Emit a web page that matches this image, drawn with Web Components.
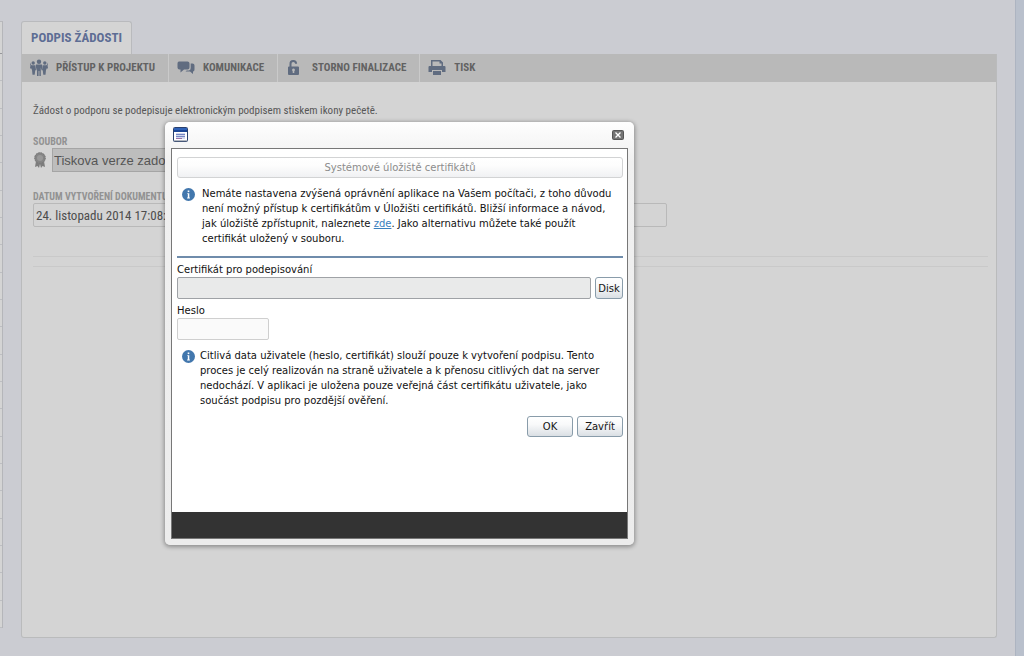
<!DOCTYPE html>
<html lang="cs">
<head>
<meta charset="utf-8">
<title>Podpis žádosti</title>
<style>
html, body { height: 100%; margin: 0; }
body { background: #cbccd2; font-family: "Roboto Condensed", "Liberation Sans Narrow", Roboto, sans-serif; color: #575757; overflow: hidden; }
</style>
</head>
<body>
<app-page>
  <side-list slot="side"></side-list>
  <tab-panel label="PODPIS ŽÁDOSTI">
    <tool-bar slot="bar">
      <tool-item icon="people" label="PŘÍSTUP K PROJEKTU"></tool-item>
      <tool-item icon="chat" label="KOMUNIKACE"></tool-item>
      <tool-item icon="lock" label="STORNO FINALIZACE"></tool-item>
      <tool-item icon="print" label="TISK"></tool-item>
    </tool-bar>
    <request-form></request-form>
  </tab-panel>
</app-page>
<sign-dialog></sign-dialog>
<script>
const define = (name, html, setup) => customElements.define(name, class extends HTMLElement {
  connectedCallback() {
    if (this.shadowRoot) return;
    const root = this.attachShadow({ mode: "open" });
    root.innerHTML = html;
    if (setup) setup(root, this);
  }
});

const icons = {
  people: '<svg width="18" height="18" viewBox="0 0 18 18"><g fill="#606c80"><circle cx="3.2" cy="4" r="1.7"/><circle cx="14.8" cy="4" r="1.7"/><path d="M1 6.3h4.3v4.5l-.6 5H2.5L2 11 1 9zM12.7 6.3H17V9l-1 2-.5 4.8h-2.2l-.6-5z"/><path d="M0 3.5l1.6 3-1 3.5L0 9l.4-2.2zM18 3.5l-1.6 3 1 3.5.6-1-.4-2.2z"/><circle cx="9" cy="2.8" r="2.2"/><path d="M6 5.6h6l1 5.7h-1.4l-.8-2.8V17H9.4v-5h-.8v5H7V8.500l-.7 2.800H5z"/></g></svg>',
  chat: '<svg width="18" height="18" viewBox="0 0 18 18"><g fill="#606c80"><path d="M2 2.500h8.500q2 0 2 2v4q0 2-2 2H7l-3.500 3v-3H2.500q-2 0-2-2v-4q0-2 1.500-2z"/><path d="M13.700 4.500h1.800q2 0 2 2v4q0 2-1.500 2v2.500l-3-2.500H8.500l1.200-1H12q1.700-.5 1.700-2.500z"/></g></svg>',
  lock: '<svg width="18" height="18" viewBox="0 0 18 18"><path d="M4.500 8V5a2.800 2.800 0 0 1 5.600-.3" fill="none" stroke="#606c80" stroke-width="2"/><path fill="#606c80" fill-rule="evenodd" d="M3 7.500h9q1 0 1 1V15q0 1-1 1H3q-1 0-1-1V8.500q0-1 1-1zM7.500 9.500a1.500 1.500 0 0 0-.8 2.700V14h1.600v-1.800A1.500 1.500 0 0 0 7.500 9.500z"/></svg>',
  print: '<svg width="18" height="18" viewBox="0 0 18 18"><path fill="#606c80" fill-rule="evenodd" d="M3 1h9.500L15 3.500V7h1.500Q17.500 7 17.500 8v5H14v-2H4v2H.500V8q0-1 1-1H3zM4.500 2.500V7h9V4.500h-2v-2z"/><path fill="#606c80" d="M5 12h8v4H5z"/></svg>',
  info: '<svg width="13" height="13" viewBox="0 0 13 13"><circle cx="6.500" cy="6.500" r="6.500" fill="#4277ad"/><rect x="5.700" y="2.500" width="1.600" height="1.600" fill="#fff"/><path d="M5.300 5.300h2v4.200h.6v.9H5.100v-.9h.7V6.100h-.5z" fill="#fff"/></svg>'
};

define("app-page", `<style>
:host { display: flex; min-height: 100vh; box-sizing: border-box; }
main { flex: 1; min-width: 0; display: flex; padding: 21px 18px 18px 18px; }
.edge { width: 9px; box-sizing: border-box; background: #b9c0cc; border-left: 1px solid #adb4c1; }
</style><slot name="side"></slot><main><slot></slot></main><div class="edge"></div>`);

define("side-list", `<style>
:host { display: flex; flex-direction: column; width: 3px; box-sizing: border-box; margin: 21px 0 28px; border-right: 1px solid #b5b6ba; border-top: 1px solid #b8b9bd; background: #d4d4d4; }
i { flex: 1; box-sizing: border-box; border-bottom: 1px solid #bdbec2; }
i:first-of-type { flex: none; height: 32px; border-color: #96979b; }
</style>` + "<i></i>".repeat(22));

define("tab-panel", `<style>
:host { flex: 1; min-width: 0; display: flex; flex-direction: column; }
a { align-self: flex-start; box-sizing: border-box; height: 33px; padding: 0 9px; border: 1px solid #b9babd; border-bottom: 0; border-radius: 3px 3px 0 0; background: #d4d4d4; color: #5d6d94; font: bold 13px/32px "Roboto Condensed", "Liberation Sans Narrow", Roboto, sans-serif; text-decoration: none; white-space: nowrap; }
section { flex: 1; border: 1px solid #babbbc; border-top: 0; border-radius: 0 0 3px 3px; background: #d4d4d4; }
</style><a href="#"></a><section><slot name="bar"></slot><slot></slot></section>`,
(r, el) => { r.querySelector("a").textContent = el.getAttribute("label"); });

define("tool-bar", `<style>
:host { display: flex; height: 28px; background: #b9b9b9; }
</style><slot></slot>`);

define("tool-item", `<style>
:host { display: flex; border-right: 1px solid #cacaca; }
:host(:last-of-type) { border: 0; }
button { display: flex; align-items: center; gap: 8px; border: 0; background: none; padding: 0 13px 0 8px; color: #626262; font: bold 11px/28px "Roboto Condensed", "Liberation Sans Narrow", Roboto, sans-serif; white-space: nowrap; }
</style><button></button>`,
(r, el) => { r.querySelector("button").innerHTML = icons[el.getAttribute("icon")] + "<span>" + el.getAttribute("label") + "</span>"; });

define("request-form", `<style>
:host { display: block; padding: 20px 8px 0 11px; }
p { margin: 0 0 16px; font-size: 11px; line-height: 18px; white-space: nowrap; }
label { display: block; font-size: 10px; line-height: 12px; font-weight: bold; color: #929292; white-space: nowrap; }
.file { display: flex; align-items: center; gap: 5px; margin-bottom: 19px; }
input { box-sizing: border-box; height: 24px; margin: 0; color: #555; border: 1px solid #b9b9b9; border-radius: 2px; outline: 0; }
#file { width: 400px; padding: 0 1px; background: #bdbdbd; border-color: #a5a5a5; border-radius: 0; font: 13px "Liberation Sans", Arial, sans-serif; }
#date { display: block; width: 634px; margin-bottom: 29px; padding: 0 2px; background: #d4d4d4; font: 13px "Roboto Condensed", "Liberation Sans Narrow", Roboto, sans-serif; color: #4d4d4d; }
hr { margin: 0 0 9px; border: 0; border-top: 1px solid #c9c9c9; }
</style>
<p>Žádost o podporu se podepisuje elektronickým podpisem stiskem ikony pečetě.</p>
<label for="file">SOUBOR</label>
<div class="file"><svg width="14" height="16" viewBox="0 0 14 16"><path d="M3 9L2 15l2.500-1L6 16l1-4 1 4 1.500-2 2.500 1-1-6z" fill="#7d7d7d"/><circle cx="7" cy="6" r="5.500" fill="#858585"/><circle cx="7" cy="6" r="5.300" fill="none" stroke="#777" stroke-dasharray="1.500 1"/><circle cx="7" cy="6" r="3" fill="#999"/></svg><input id="file" value="Tiskova verze zadosti" readonly></div>
<label for="date">DATUM VYTVOŘENÍ DOKUMENTU</label>
<input id="date" value="24. listopadu 2014 17:08:">
<hr><hr>`);

define("info-note", `<style>
:host { display: flex; align-items: flex-start; gap: var(--gap, 5px); padding-left: 5px; }
svg { flex: none; margin-top: 2px; }
p { margin: 0; line-height: 15px; white-space: nowrap; }
</style>${icons.info}<p><slot></slot></p>`);

define("sign-dialog", `<style>
:host { position: absolute; left: 165px; top: 122px; width: 469px; box-sizing: border-box; padding: 0 6px 6px; border-radius: 5px; background: linear-gradient(#fefefe, #f0f0f0 40px, #ececec); box-shadow: 0 1px 4px 1px #00000055; color: #111; font: 10px/14px "DejaVu Sans", Verdana, sans-serif; }
header { height: 26px; padding: 0 4px 0 2px; display: flex; align-items: center; justify-content: space-between; }
button { font: 10px "DejaVu Sans", Verdana, sans-serif; }
.close { display: flex; padding: 0; border: 0; background: none; }
.body { border: 1px solid #777; background: #fff; }
.content { height: 363px; box-sizing: border-box; padding: 8px 4px 0 5px; }
.store { display: block; width: 100%; height: 21px; padding: 0; border: 1px solid #d2d3d4; border-radius: 3px; background: linear-gradient(#fff, #fdfdfd 40%, #f0f1f3); color: #8c8c8c; }
.first { --gap: 7px; margin-top: 8px; }
a { color: #3a80be; }
hr { margin: 10px 0 5px; border: 0; border-top: 2px solid #6f8cab; }
label { display: block; }
.row { display: flex; gap: 4px; margin: 0 0 5px; }
input { box-sizing: border-box; height: 22px; margin: 0; border: 1px solid #cfcfcf; border-radius: 2px; background: #fafafa; outline: 0; }
#cert { flex: 1; min-width: 0; background: #e9eaea; border-color: #9fa2a6; }
#pass { display: block; width: 92px; margin-bottom: 8px; }
.btn { box-sizing: border-box; height: 21px; padding: 0; border: 1px solid #899caa; border-radius: 3px; background: linear-gradient(#fff, #f8f9fa 40%, #dadfe4); color: #151515; }
.disk { width: 28px; height: 22px; }
.actions { display: flex; justify-content: flex-end; gap: 4px; margin-top: 8px; }
.actions .btn { width: 46px; }
footer { height: 26px; background: #333; }
</style>
<header><svg width="16" height="16" viewBox="0 0 16 16"><rect x=".5" y=".5" width="14" height="14" rx="1" fill="#fff" stroke="#29406e"/><path d="M1 1h13v4H1z" fill="#1c4696"/><path d="M1 1h13v2H1z" fill="#2f62b8"/><path d="M3 6h9v6H3z" fill="#d3d9ee"/><path d="M3 7h9v1H3zM3 9h9v1H3z" fill="#7788c5"/><path d="M3 11h6v1H3z" fill="#9b72a8"/><path d="M1 14h13" stroke="#667083"/></svg>
<button class="close" aria-label="Zavřít okno"><svg width="12" height="10" viewBox="0 0 12 10"><rect width="12" height="10" rx="2" fill="#555"/><rect x="1" y="1" width="10" height="8" rx="1" fill="#747474"/><path d="M3.500 2.500l5 5m0-5l-5 5" stroke="#fff" stroke-width="1.300"/></svg></button></header>
<div class="body"><div class="content">
<button class="store" disabled>Systémové úložiště certifikátů</button>
<info-note class="first">Nemáte nastavena zvýšená oprávnění aplikace na Vašem počítači, z toho důvodu<br>není možný přístup k certifikátům v Úložišti certifikátů. Bližší informace a návod,<br>jak úložiště zpřístupnit, naleznete <a href="#">zde</a>. Jako alternativu můžete také použít<br>certifikát uložený v souboru.</info-note>
<hr>
<label for="cert">Certifikát pro podepisování</label>
<div class="row"><input id="cert" readonly><button class="btn disk">Disk</button></div>
<label for="pass">Heslo</label>
<input id="pass" type="password">
<info-note>Citlivá data uživatele (heslo, certifikát) slouží pouze k vytvoření podpisu. Tento<br>proces je celý realizován na straně uživatele a k přenosu citlivých dat na server<br>nedochází. V aplikaci je uložena pouze veřejná část certifikátu uživatele, jako<br>součást podpisu pro pozdější ověření.</info-note>
<div class="actions"><button class="btn">OK</button><button class="btn">Zavřít</button></div>
</div><footer></footer></div>`);
</script>
</body>
</html>
